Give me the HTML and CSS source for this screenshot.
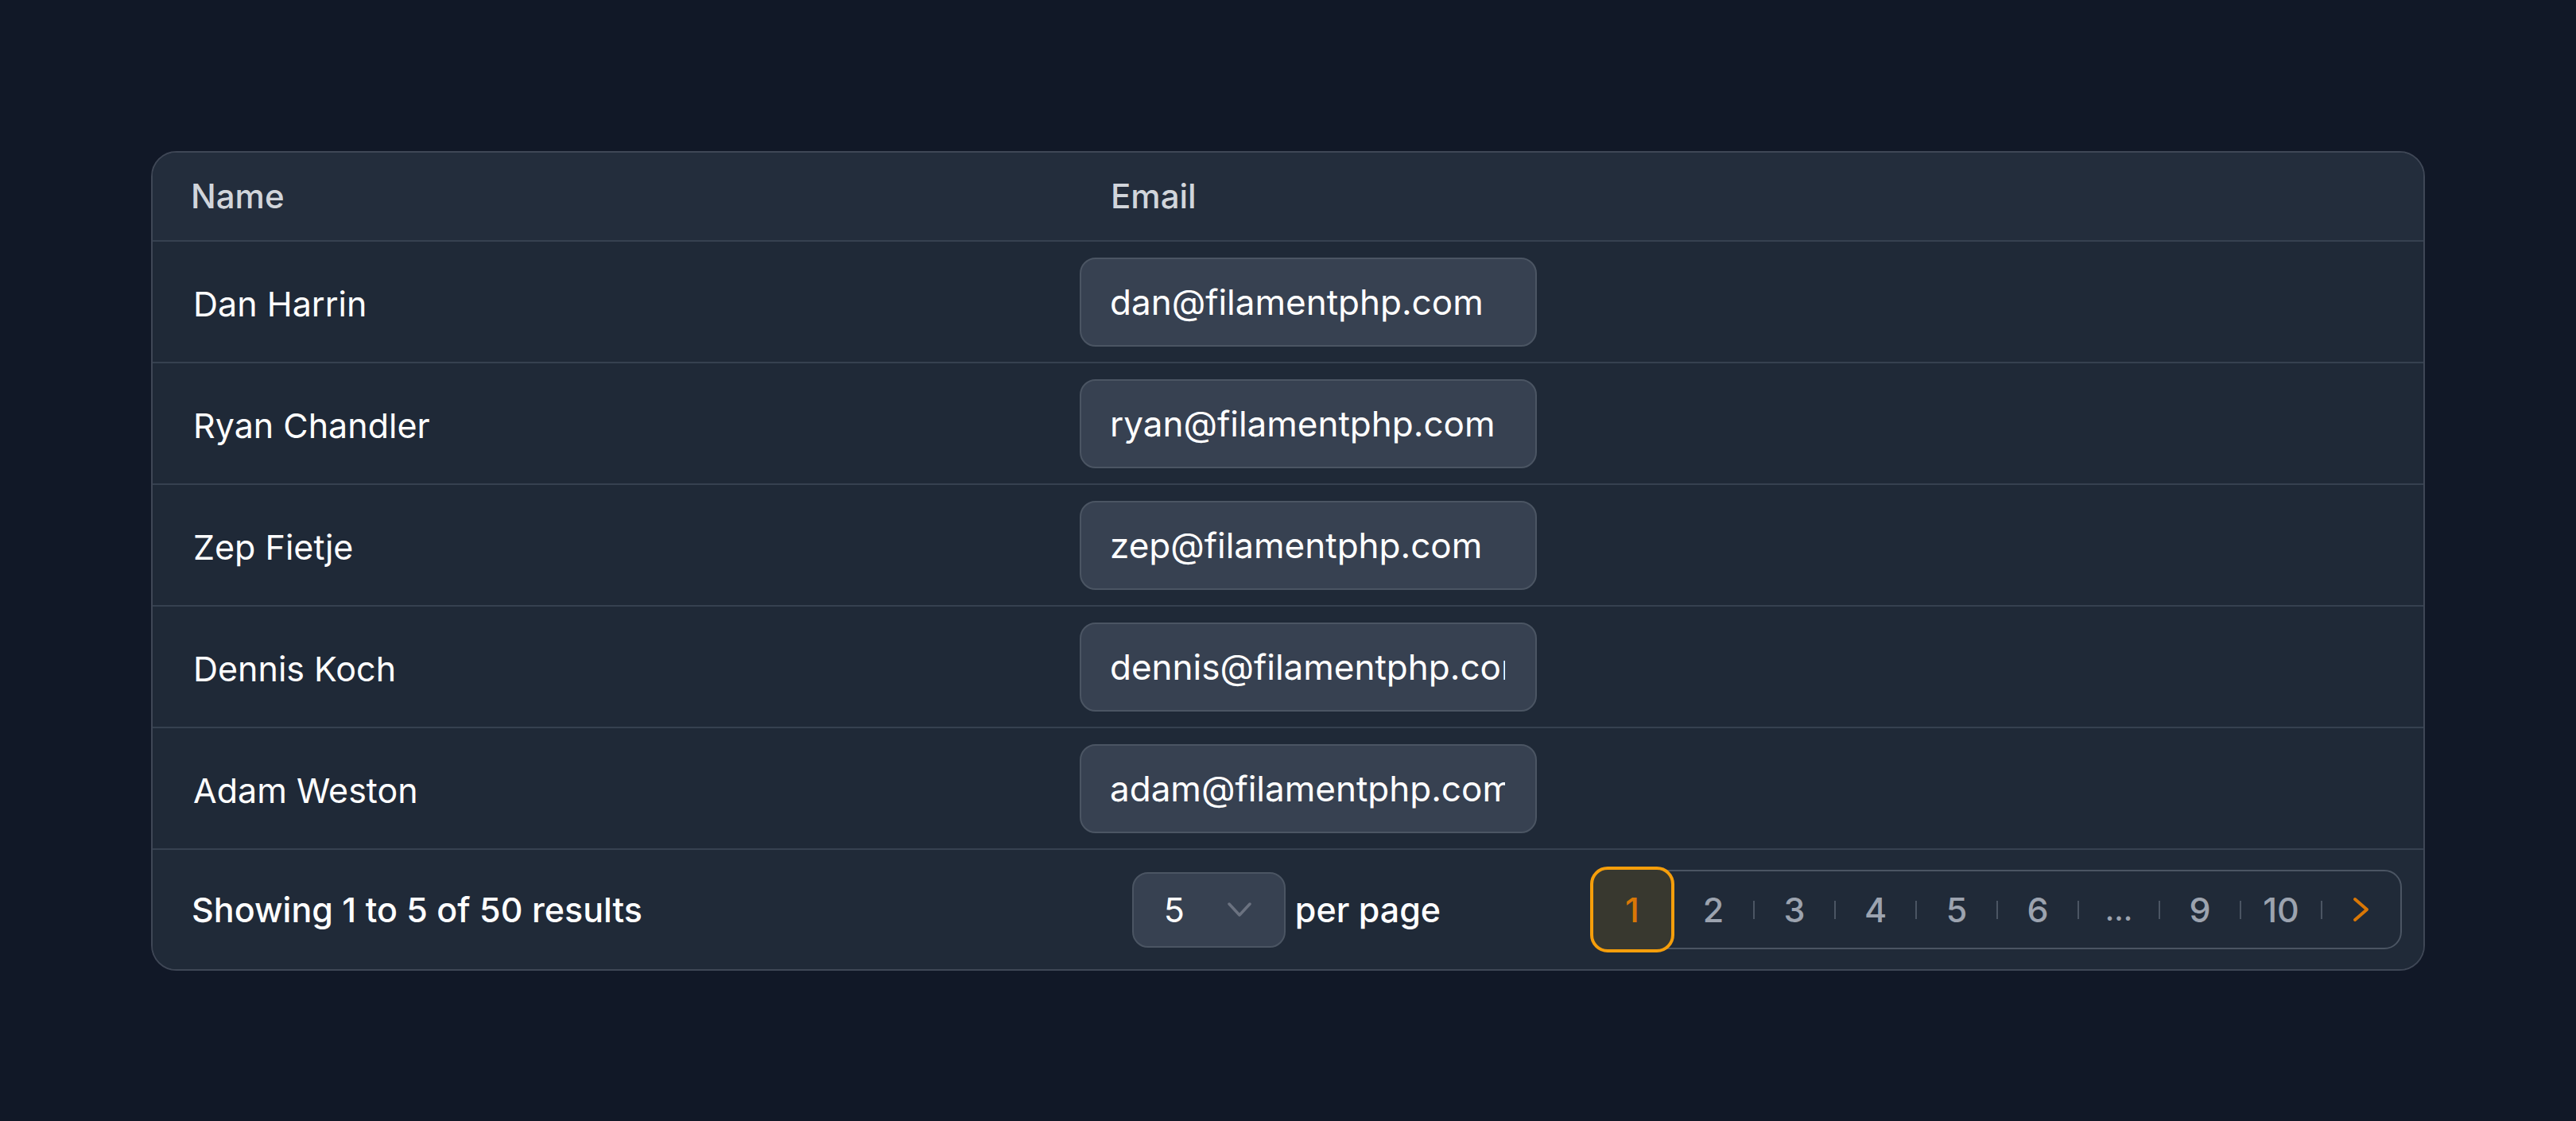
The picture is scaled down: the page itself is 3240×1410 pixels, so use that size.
FILE: index.html
```html
<!DOCTYPE html>
<html lang="en">
<head>
<meta charset="utf-8">
<title>Users table</title>
<link rel="stylesheet" href="styles.css">
</head>
<body>
<div class="card">
  <div class="row head">
    <div class="cell name-h">Name</div>
    <div class="cell email-h">Email</div>
  </div>
  <div class="row">
    <div class="cell name">Dan Harrin</div>
    <div class="cell email"><input class="field" type="text" value="dan@filamentphp.com"></div>
  </div>
  <div class="row">
    <div class="cell name">Ryan Chandler</div>
    <div class="cell email"><input class="field" type="text" value="ryan@filamentphp.com"></div>
  </div>
  <div class="row">
    <div class="cell name">Zep Fietje</div>
    <div class="cell email"><input class="field" type="text" value="zep@filamentphp.com"></div>
  </div>
  <div class="row">
    <div class="cell name">Dennis Koch</div>
    <div class="cell email"><input class="field" type="text" value="dennis@filamentphp.com"></div>
  </div>
  <div class="row">
    <div class="cell name">Adam Weston</div>
    <div class="cell email"><input class="field" type="text" value="adam@filamentphp.com"></div>
  </div>
  <div class="footer">
    <div class="summary">Showing 1 to 5 of 50 results</div>
    <div class="perpage">
      <div class="select">
        <span class="select-value">5</span>
        <svg class="select-chevron" viewBox="0 0 30 19" width="30" height="19"><path d="M2 2 L15 16 L28 2" fill="none" stroke="#6b7280" stroke-width="3.5" stroke-linecap="round" stroke-linejoin="round"/></svg>
      </div>
      <span class="perpage-label">per page</span>
    </div>
    <div class="pager-wrap">
      <ol class="pager">
        <li class="page active">1</li>
        <li class="page sep">2</li>
        <li class="page sep">3</li>
        <li class="page sep">4</li>
        <li class="page sep">5</li>
        <li class="page sep">6</li>
        <li class="page sep dots">...</li>
        <li class="page sep">9</li>
        <li class="page sep">10</li>
        <li class="page next"><svg viewBox="0 0 22 32" width="22" height="32"><path d="M3 3 L18 16 L3 29" fill="none" stroke="#d97706" stroke-width="4" stroke-linecap="round" stroke-linejoin="round"/></svg></li>
      </ol>
    </div>
  </div>
</div>
</body>
</html>
```

FILE: styles.css
```css
* { box-sizing: border-box; }

html, body {
  margin: 0;
  padding: 0;
  background: #111827;
}

body {
  padding: 190px;
  font-family: Inter, "Noto Sans", sans-serif;
  color: #ffffff;
}

.card {
  width: 2860px;
  border: 2px solid #3f4756;
  border-radius: 32px;
  background: #1f2937;
  overflow: hidden;
}

.row {
  display: grid;
  grid-template-columns: 1130px 1fr;
  height: 153px;
  border-top: 2px solid #364150;
  align-items: center;
}

.row.head {
  height: 110px;
  border-top: none;
  background: #232d3c;
}

.cell {
  min-width: 0;
}

.name-h {
  padding-left: 48px;
  padding-bottom: 2px;
  font-size: 42px;
  font-weight: 500;
  color: #d1d5db;
}

.email-h {
  padding-left: 75px;
  padding-bottom: 2px;
  font-size: 42px;
  font-weight: 500;
  color: #d1d5db;
}

.name {
  padding-left: 51px;
  padding-top: 4px;
  font-size: 43px;
  color: #ffffff;
}

.email {
  padding-left: 36px;
}

.field {
  display: block;
  width: 575px;
  height: 112px;
  padding: 0 38px 0 36px;
  border: 2px solid #4b5563;
  border-radius: 20px;
  background: #374151;
  color: #ffffff;
  font-family: inherit;
  font-size: 44px;
  outline: none;
}

.footer {
  display: grid;
  grid-template-columns: 1fr auto 1fr;
  align-items: center;
  height: 152px;
  border-top: 2px solid #364150;
  padding: 0 27px;
  background: #202a38;
}

.summary {
  padding-left: 22px;
  font-size: 43px;
  font-weight: 500;
}

.perpage {
  display: flex;
  align-items: center;
  gap: 12px;
  margin-left: -4px;
}

.select {
  display: flex;
  align-items: center;
  justify-content: space-between;
  width: 193px;
  height: 95px;
  padding: 0 41px 0 38px;
  border: 2px solid #4b5563;
  border-radius: 20px;
  background: #374151;
  font-size: 43px;
}

.perpage-label {
  font-size: 43px;
  font-weight: 500;
}

.pager-wrap {
  display: flex;
  justify-content: flex-end;
}

.pager {
  display: flex;
  align-items: center;
  margin: 0;
  padding: 0;
  list-style: none;
  height: 100px;
  border: 2px solid #4b5563;
  border-radius: 22px;
}

.page {
  position: relative;
  display: flex;
  align-items: center;
  justify-content: center;
  width: 102px;
  height: 96px;
  font-size: 43px;
  font-weight: 500;
  color: #9ca3af;
}

.page.sep::after {
  content: "";
  position: absolute;
  right: -1px;
  top: 37px;
  width: 2px;
  height: 23px;
  background: #4b5563;
}

.page.active {
  width: 106px;
  height: 108px;
  margin: -6px -2px -6px -2px;
  border: 4px solid #f59e0b;
  border-radius: 22px;
  background: #38382f;
  color: #d97706;
  z-index: 1;
}

.page.dots {
  font-size: 38px;
}

.page.next {
  width: 99px;
}
```
